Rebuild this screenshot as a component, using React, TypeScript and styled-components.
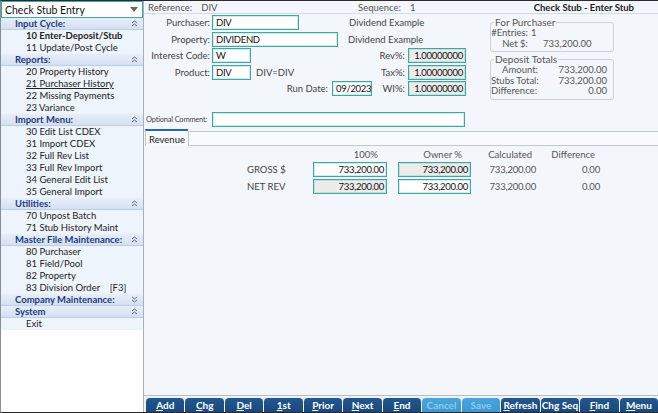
import React from "react";
import styled, { createGlobalStyle } from "styled-components";

const GlobalStyle = createGlobalStyle`
  html, body { margin: 0; padding: 0; background: #fff; }
  body { font-family: Lato, "Noto Sans", "DejaVu Sans", sans-serif; font-size: 9.5px; color: #222; }
  * { box-sizing: border-box; }
`;

const Frame = styled.div`
  width: 658px;
  height: 413px;
  display: flex;
  border-top: 1px solid #2b2b2b;
  border-bottom: 1px solid #2b2b2b;
  border-left: 1px solid #8a8f96;
  overflow: hidden;
  background: #fff;
`;

/* ---------- Sidebar ---------- */
const Sidebar = styled.nav`
  width: 143px;
  flex: none;
  border-right: 1px solid #a7b0ba;
  display: flex;
  flex-direction: column;
  background: #fff;
`;

const Dropdown = styled.div`
  height: 17px;
  flex: none;
  border: 1px solid #3fa6a4;
  display: flex;
  align-items: center;
  justify-content: space-between;
  padding: 0 4px 0 3px;
  font-size: 10.5px;
  color: #111;
  background: #fff;
`;

const SectionHeader = styled.div`
  height: 12px;
  flex: none;
  display: flex;
  align-items: center;
  justify-content: space-between;
  padding: 0 5px 0 14px;
  background: linear-gradient(#e6eef9, #d4e0f2);
  border-bottom: 1px solid #bfcde3;
  color: #1c3a7c;
  font-weight: 700;
  font-size: 9.5px;
  line-height: 11px;
  white-space: nowrap;
`;

const MenuItem = styled.div<{ $bold?: boolean; $underline?: boolean }>`
  height: 12px;
  flex: none;
  padding-left: 25px;
  background: #eef4fb;
  color: #222;
  font-size: 9.5px;
  line-height: 12px;
  white-space: pre;
  font-weight: ${(p) => (p.$bold ? 700 : 400)};
  text-decoration: ${(p) => (p.$underline ? "underline" : "none")};
`;

const SidebarRest = styled.div`
  flex: 1;
  background: #fff;
`;

const Chevrons = ({ down }: { down?: boolean }) => (
  <svg width="7" height="7" viewBox="0 0 7 7">
    <g fill="none" stroke="#5b6b86" strokeWidth="1">
      {down ? (
        <>
          <polyline points="1,1 3.5,3 6,1" />
          <polyline points="1,4 3.5,6 6,4" />
        </>
      ) : (
        <>
          <polyline points="1,3 3.5,1 6,3" />
          <polyline points="1,6 3.5,4 6,6" />
        </>
      )}
    </g>
  </svg>
);

/* ---------- Main ---------- */
const Main = styled.main`
  flex: 1;
  display: flex;
  flex-direction: column;
  background: #f3f6fb;
  min-width: 0;
`;

const TopBar = styled.div`
  height: 13px;
  flex: none;
  display: flex;
  align-items: center;
  padding: 0 24px 0 4px;
  border-bottom: 1px solid #d3dbe5;
  color: #555;
`;

const TopField = styled.div<{ $w?: number }>`
  display: flex;
  gap: 9px;
  width: ${(p) => (p.$w ? `${p.$w}px` : "auto")};
`;

const Title = styled.div`
  margin-left: auto;
  font-weight: 700;
  color: #222;
`;

const Upper = styled.div`
  height: 97px;
  flex: none;
  display: flex;
`;

const FormGrid = styled.div`
  width: 322px;
  padding: 1px 0 0 4px;
  display: grid;
  grid-auto-rows: 15px;
  row-gap: 1.6px;
  align-content: start;
`;

const FieldRow = styled.div`
  display: flex;
  align-items: center;
`;

const Label = styled.span<{ $w?: number; $ml?: number; $auto?: boolean }>`
  width: ${(p) => (p.$w ? `${p.$w}px` : "auto")};
  margin-left: ${(p) => (p.$auto ? "auto" : `${p.$ml ?? 0}px`)};
  text-align: right;
  color: #444;
  white-space: nowrap;
  flex: none;
`;

const Text = styled.span<{ $ml?: number }>`
  margin-left: ${(p) => p.$ml ?? 0}px;
  color: #444;
  white-space: nowrap;
`;

const Input = styled.div<{ $w: number; $ml?: number; $right?: boolean; $grey?: boolean }>`
  width: ${(p) => p.$w}px;
  height: 15px;
  flex: none;
  margin-left: ${(p) => p.$ml ?? 0}px;
  border: 1px solid #3fa6a4;
  box-shadow: inset 0 0 0 1px rgba(120, 200, 198, 0.35);
  background: ${(p) => (p.$grey ? "#ececeb" : "#fff")};
  color: #111;
  line-height: 13px;
  padding: 0 2px 0 3px;
  letter-spacing: -0.3px;
  text-align: ${(p) => (p.$right ? "right" : "left")};
  white-space: nowrap;
  overflow: hidden;
`;

const RightPanel = styled.div`
  margin-left: 24px;
  padding-top: 2px;
  width: 124px;
  display: flex;
  flex-direction: column;
  gap: 1px;
`;

const Group = styled.fieldset`
  margin: 0;
  padding: 0 6px 2px 0;
  border: 1px solid #c9d2dd;
  border-radius: 3px;
  min-width: 0;
`;

const Legend = styled.legend`
  padding: 0 1px;
  margin-left: 3px;
  color: #555;
  font-size: 10px;
  line-height: 12px;
`;

const StatRow = styled.div`
  display: flex;
  height: 10.5px;
  line-height: 10.5px;
  color: #555;
  white-space: nowrap;
`;

const StatLabel = styled.span<{ $w: number }>`
  width: ${(p) => p.$w}px;
  text-align: right;
  flex: none;
`;

const StatValue = styled.span<{ $ml?: number; $right?: boolean }>`
  margin-left: ${(p) => p.$ml ?? 0}px;
  flex: ${(p) => (p.$right ? 1 : "none")};
  text-align: ${(p) => (p.$right ? "right" : "left")};
`;

const CommentRow = styled.div`
  height: 17px;
  flex: none;
  display: flex;
  align-items: center;
  padding-left: 2px;
`;

const SmallLabel = styled.span`
  width: 66px;
  font-size: 7.5px;
  letter-spacing: -0.2px;
  color: #444;
  white-space: nowrap;
`;

const TabStrip = styled.div`
  height: 17px;
  flex: none;
  display: flex;
  align-items: flex-end;
  margin-top: 1px;
`;

const Tab = styled.div`
  height: 17px;
  padding: 2px 3px 0 3px;
  border-top: 2px solid #2a67b0;
  border-left: 1px solid #c0c9d3;
  background: #f6f9fd;
  color: #222;
  line-height: 13px;
  margin-left: 1px;
`;

const TabRest = styled.div`
  flex: 1;
  height: 15px;
  border: 1px solid #c0c9d3;
  border-right: none;
  background: #f8fafd;
`;

const TabBody = styled.div`
  flex: 1;
  padding: 3px 0 0 103px;
`;

const RevGrid = styled.div`
  display: grid;
  grid-template-columns: 66px 74px 84px 65px 64px;
  grid-template-rows: 11px 15px 15px;
  row-gap: 2px;
  align-items: center;
`;

const ColHead = styled.div<{ $pr: number }>`
  text-align: right;
  padding-right: ${(p) => p.$pr}px;
  color: #555;
  line-height: 11px;
`;

const RowLabel = styled.div`
  color: #444;
`;

const Cell = styled.div<{ $pr?: number }>`
  text-align: right;
  padding-right: ${(p) => p.$pr ?? 0}px;
  color: #555;
  letter-spacing: -0.2px;
`;

const InputCell = styled.div`
  display: flex;
  justify-content: flex-end;
`;

const Toolbar = styled.div`
  height: 17px;
  flex: none;
  display: flex;
  gap: 1px;
  padding: 2px 0 0 2px;
  border-top: 1px solid #b4bec9;
  background: #eef3f9;
`;

const ToolButton = styled.div<{ $disabled?: boolean }>`
  flex: 1;
  border-radius: 4px 4px 0 0;
  background: ${(p) =>
    p.$disabled ? "linear-gradient(#49a6dc, #3b98d2)" : "linear-gradient(#23578e, #18497d)"};
  color: ${(p) => (p.$disabled ? "#8fcbea" : "#fff")};
  font-weight: 700;
  font-size: 10px;
  line-height: 15px;
  text-align: center;
  white-space: nowrap;
  u { text-decoration: underline; }
`;

type Section = {
  title: string;
  collapsed?: boolean;
  items: { label: string; bold?: boolean; underline?: boolean }[];
};

const sections: Section[] = [
  {
    title: "Input Cycle:",
    items: [{ label: "10 Enter-Deposit/Stub", bold: true }, { label: "11 Update/Post Cycle" }],
  },
  {
    title: "Reports:",
    items: [
      { label: "20 Property History" },
      { label: "21 Purchaser History", underline: true },
      { label: "22 Missing Payments" },
      { label: "23 Variance" },
    ],
  },
  {
    title: "Import Menu:",
    items: [
      { label: "30 Edit List CDEX" },
      { label: "31 Import CDEX" },
      { label: "32 Full Rev List" },
      { label: "33 Full Rev Import" },
      { label: "34 General Edit List" },
      { label: "35 General Import" },
    ],
  },
  {
    title: "Utilities:",
    items: [{ label: "70 Unpost Batch" }, { label: "71 Stub History Maint" }],
  },
  {
    title: "Master File Maintenance:",
    items: [
      { label: "80 Purchaser" },
      { label: "81 Field/Pool" },
      { label: "82 Property" },
      { label: "83 Division Order    [F3]" },
    ],
  },
  { title: "Company Maintenance:", collapsed: true, items: [] },
  { title: "System", items: [{ label: "Exit" }] },
];

const buttons: { key: string; post: string; disabled?: boolean }[] = [
  { key: "A", post: "dd" },
  { key: "C", post: "hg" },
  { key: "D", post: "el" },
  { key: "1", post: "st" },
  { key: "P", post: "rior" },
  { key: "N", post: "ext" },
  { key: "E", post: "nd" },
  { key: "", post: "Cancel", disabled: true },
  { key: "", post: "Save", disabled: true },
  { key: "R", post: "efresh" },
  { key: "", post: "Chg Seq" },
  { key: "F", post: "ind" },
  { key: "M", post: "enu" },
];

export default function App() {
  return (
    <>
      <GlobalStyle />
      <Frame>
        <Sidebar>
          <Dropdown>
            <span>Check Stub Entry</span>
            <svg width="8" height="5" viewBox="0 0 8 5">
              <polygon points="0,0 8,0 4,5" fill="#666" />
            </svg>
          </Dropdown>
          {sections.map((s) => (
            <React.Fragment key={s.title}>
              <SectionHeader>
                <span>{s.title}</span>
                <Chevrons down={s.collapsed} />
              </SectionHeader>
              {s.items.map((it) => (
                <MenuItem key={it.label} $bold={it.bold} $underline={it.underline}>
                  {it.label}
                </MenuItem>
              ))}
            </React.Fragment>
          ))}
          <SidebarRest />
        </Sidebar>

        <Main>
          <TopBar>
            <TopField $w={210}>
              <span>Reference:</span>
              <span>DIV</span>
            </TopField>
            <TopField>
              <span>Sequence:</span>
              <span>1</span>
            </TopField>
            <Title>Check Stub - Enter Stub</Title>
          </TopBar>

          <Upper>
            <FormGrid>
              <FieldRow>
                <Label $w={62}>Purchaser:</Label>
                <Input $w={87} $ml={2}>DIV</Input>
                <Text $ml={50}>Dividend Example</Text>
              </FieldRow>
              <FieldRow>
                <Label $w={62}>Property:</Label>
                <Input $w={126} $ml={2}>DIVIDEND</Input>
                <Text $ml={10}>Dividend Example</Text>
              </FieldRow>
              <FieldRow>
                <Label $w={62}>Interest Code:</Label>
                <Input $w={39} $ml={2}>W</Input>
                <Label $auto>Rev%:</Label>
                <Input $w={58} $ml={3} $right $grey>1.00000000</Input>
              </FieldRow>
              <FieldRow>
                <Label $w={62}>Product:</Label>
                <Input $w={39} $ml={2}>DIV</Input>
                <Text $ml={5}>DIV=DIV</Text>
                <Label $auto>Tax%:</Label>
                <Input $w={58} $ml={3} $right $grey>1.00000000</Input>
              </FieldRow>
              <FieldRow>
                <Label $auto>Run Date:</Label>
                <Input $w={40} $ml={4}>09/2023</Input>
                <Label $w={33}>WI%:</Label>
                <Input $w={58} $ml={3} $right $grey>1.00000000</Input>
              </FieldRow>
            </FormGrid>

            <RightPanel>
              <Group>
                <Legend>For Purchaser</Legend>
                <StatRow>
                  <StatLabel $w={37}>#Entries:</StatLabel>
                  <StatValue $ml={3}>1</StatValue>
                </StatRow>
                <StatRow>
                  <StatLabel $w={37}>Net $:</StatLabel>
                  <StatValue $ml={15}>733,200.00</StatValue>
                </StatRow>
              </Group>
              <Group>
                <Legend>Deposit Totals</Legend>
                <StatRow>
                  <StatLabel $w={47}>Amount:</StatLabel>
                  <StatValue $right>733,200.00</StatValue>
                </StatRow>
                <StatRow>
                  <StatLabel $w={45}>Stubs Total:</StatLabel>
                  <StatValue $right>733,200.00</StatValue>
                </StatRow>
                <StatRow>
                  <StatLabel $w={45}>Difference:</StatLabel>
                  <StatValue $right>0.00</StatValue>
                </StatRow>
              </Group>
            </RightPanel>
          </Upper>

          <CommentRow>
            <SmallLabel>Optional Comment:</SmallLabel>
            <Input $w={253} />
          </CommentRow>

          <TabStrip>
            <Tab>Revenue</Tab>
            <TabRest />
          </TabStrip>

          <TabBody>
            <RevGrid>
              <span />
              <ColHead $pr={9}>100%</ColHead>
              <ColHead $pr={9}>Owner %</ColHead>
              <ColHead $pr={4}>Calculated</ColHead>
              <ColHead $pr={5}>Difference</ColHead>

              <RowLabel>GROSS $</RowLabel>
              <InputCell>
                <Input $w={74} $right>733,200.00</Input>
              </InputCell>
              <InputCell>
                <Input $w={73} $right $grey>733,200.00</Input>
              </InputCell>
              <Cell>733,200.00</Cell>
              <Cell>0.00</Cell>

              <RowLabel>NET REV</RowLabel>
              <InputCell>
                <Input $w={74} $right $grey>733,200.00</Input>
              </InputCell>
              <InputCell>
                <Input $w={73} $right>733,200.00</Input>
              </InputCell>
              <Cell>733,200.00</Cell>
              <Cell>0.00</Cell>
            </RevGrid>
          </TabBody>

          <Toolbar>
            {buttons.map((b, i) => (
              <ToolButton key={i} $disabled={b.disabled}>
                {b.key && <u>{b.key}</u>}
                {b.post}
              </ToolButton>
            ))}
          </Toolbar>
        </Main>
      </Frame>
    </>
  );
}
